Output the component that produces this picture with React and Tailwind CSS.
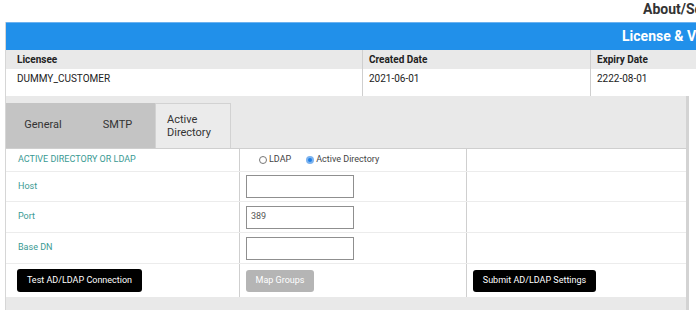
export default function App() {
  const labelCls = "pl-[12px] flex items-center text-[9px] text-[#3a9a93]";
  const midCls = "border-l border-[#cfcfcf] pl-[6px] flex items-center";
  const endCls = "border-l border-[#cfcfcf] pl-[6px] flex items-center";

  return (
    <div className="w-[696px] h-[321px] overflow-hidden bg-white font-['Roboto',sans-serif] text-[#333]">
      <div className="w-[780px]">
        {/* page title */}
        <div className="h-[22px] pl-[643px] text-[14px] font-bold leading-[18px] whitespace-nowrap text-[#333]">
          About/Settings
        </div>

        <div className="ml-[5px] border-l border-[#d6d6d6]">
          {/* License header bar */}
          <div className="h-[28px] bg-[#2190ea] border-t border-[#6cb2f0] pl-[616px] text-[14px] font-bold leading-[26px] text-white whitespace-nowrap">
            License &amp; Version
          </div>

          {/* License table */}
          <div className="grid grid-cols-[356px_228px_1fr] h-[19px] bg-[#e9e9e9] text-[10px] font-bold leading-[19px] text-[#222]">
            <div className="pl-[11px]">Licensee</div>
            <div className="border-l border-[#cfcfcf] pl-[6px]">Created Date</div>
            <div className="border-l border-[#cfcfcf] pl-[6px]">Expiry Date</div>
          </div>
          <div className="grid grid-cols-[356px_228px_1fr] h-[27px] bg-white text-[10px] leading-[11px] text-[#222]">
            <div className="pl-[11px] pt-[4px]">DUMMY_CUSTOMER</div>
            <div className="border-l border-[#cfcfcf] pl-[6px] pt-[4px]">2021-06-01</div>
            <div className="border-l border-[#cfcfcf] pl-[6px] pt-[4px]">2222-08-01</div>
          </div>

          {/* Settings panel */}
          <div className="w-[683px] bg-[#e9e9e9] border-r-[3px] border-[#d3d3d3] pt-[7px] pb-[13px]">
            <div className="flex h-[45px] text-[11px] text-[#333]">
              <div className="w-[74px] bg-[#c4c4c4] flex items-center justify-center">General</div>
              <div className="w-[75px] bg-[#c4c4c4] flex items-center justify-center">SMTP</div>
              <div className="w-[76px] bg-[#ebebeb] border border-b-0 border-[#d2d2d2] pl-[11px] flex items-center leading-[13px]">
                Active Directory
              </div>
            </div>

            <div className="bg-white border-t border-[#cfcfcf]">
              <div className="grid grid-cols-[233px_227px_1fr] h-[23px] border-b border-[#ececec]">
                <div className={labelCls}>ACTIVE DIRECTORY OR LDAP</div>
                <div className={midCls + " pl-[19px] gap-[2px] text-[9px] text-[#444]"}>
                  <span className="w-[8px] h-[8px] rounded-full border border-[#777] bg-white" />
                  <span>LDAP</span>
                  <span className="ml-[13px] w-[8px] h-[8px] rounded-full border-[2px] border-[#7db3ef] bg-[#1f7fe6]" />
                  <span>Active Directory</span>
                </div>
                <div className={endCls} />
              </div>

              {[
                { label: "Host", value: "", h: "h-[30px]" },
                { label: "Port", value: "389", h: "h-[31px]" },
                { label: "Base DN", value: "", h: "h-[31px]" },
              ].map((row) => (
                <div
                  key={row.label}
                  className={"grid grid-cols-[233px_227px_1fr] border-b border-[#ececec] " + row.h}
                >
                  <div className={labelCls}>{row.label}</div>
                  <div className={midCls}>
                    <div className="w-[108px] h-[23px] border border-[#8f8f8f] pl-[4px] flex items-center text-[9px] text-[#555]">
                      {row.value}
                    </div>
                  </div>
                  <div className={endCls} />
                </div>
              ))}

              <div className="grid grid-cols-[233px_227px_1fr] h-[33px]">
                <div className="pl-[11px] flex items-center">
                  <button className="w-[125px] h-[23px] rounded-[3px] bg-black text-white text-[9px]">
                    Test AD/LDAP Connection
                  </button>
                </div>
                <div className={midCls}>
                  <button className="w-[68px] h-[22px] rounded-[3px] bg-[#b5b5b5] text-white text-[9px]">
                    Map Groups
                  </button>
                </div>
                <div className={endCls}>
                  <button className="w-[123px] h-[22px] rounded-[3px] bg-black text-white text-[9px]">
                    Submit AD/LDAP Settings
                  </button>
                </div>
              </div>
            </div>
          </div>
        </div>
      </div>
    </div>
  );
}
